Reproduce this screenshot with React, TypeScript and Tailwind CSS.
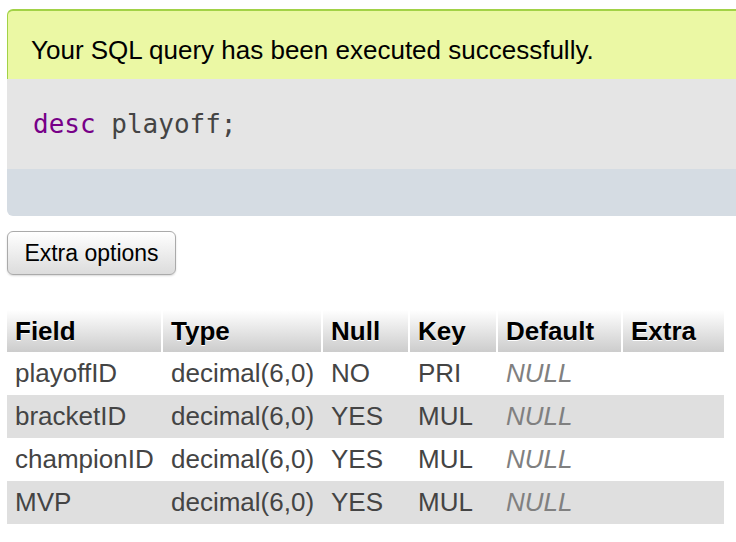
import React from 'react';

const rows = [
    { field: 'playoffID', type: 'decimal(6,0)', nul: 'NO', key: 'PRI' },
    { field: 'bracketID', type: 'decimal(6,0)', nul: 'YES', key: 'MUL' },
    { field: 'championID', type: 'decimal(6,0)', nul: 'YES', key: 'MUL' },
    { field: 'MVP', type: 'decimal(6,0)', nul: 'YES', key: 'MUL' },
];

const headers = [
    { label: 'Field', w: 'w-[156px]' },
    { label: 'Type', w: 'w-[160px]' },
    { label: 'Null', w: 'w-[87px]' },
    { label: 'Key', w: 'w-[88px]' },
    { label: 'Default', w: 'w-[125px]' },
    { label: 'Extra', w: 'w-[101px]' },
];

const App = () => {
    return (
        <div className="min-h-screen bg-white overflow-hidden pl-[7px] pt-[9px] font-['Liberation_Sans',Arial,sans-serif]">
            {/* result message */}
            <div className="-mr-6">
                <div className="h-[70px] bg-[#ebf8a4] border border-r-0 border-b-0 border-t-2 border-[#a2d246] rounded-tl-[6px] pl-[23px] pt-[24px]">
                    <span className="block text-[26px] leading-[30px] text-black">Your SQL query has been executed successfully.</span>
                </div>
                <div className="h-[90px] bg-[#e5e5e5] flex items-center pl-[26px] font-['DejaVu_Sans_Mono',monospace] text-[26px]">
                    <span className="text-[#770088]">desc</span>
                    <span className="text-[#444]">&nbsp;playoff;</span>
                </div>
                <div className="h-[47px] bg-[#d5dce3] rounded-bl-[6px]"></div>
            </div>

            <button className="mt-[15px] h-[44px] w-[169px] rounded-[6px] border border-[#aaa] bg-gradient-to-b from-white to-[#dcdcdc] text-[23px] text-black shadow-[0_1px_2px_rgba(0,0,0,0.15)]">
                Extra options
            </button>

            <table className="mt-[35px] border-separate border-spacing-0 text-[26px]">
                <thead>
                    <tr>
                        {headers.map((h, i) => (
                            <th
                                key={h.label}
                                className={`${h.w} h-[42px] text-left font-bold pl-[8px] text-black bg-gradient-to-b from-white to-[#cccccc] [text-shadow:0_1px_0_#fff] ${i < headers.length - 1 ? 'border-r-2 border-white' : ''}`}
                            >
                                {h.label}
                            </th>
                        ))}
                    </tr>
                </thead>
                <tbody>
                    {rows.map((r, i) => (
                        <tr key={r.field} className={i % 2 === 1 ? 'bg-[#dfdfdf]' : 'bg-white'}>
                            <td className="h-[43px] pl-[8px] text-[#444]">{r.field}</td>
                            <td className="pl-[8px] text-[#444]">{r.type}</td>
                            <td className="pl-[8px] text-[#444]">{r.nul}</td>
                            <td className="pl-[8px] text-[#444]">{r.key}</td>
                            <td className="pl-[8px] text-[#808080] italic">NULL</td>
                            <td className="pl-[8px]"></td>
                        </tr>
                    ))}
                </tbody>
            </table>
        </div>
    );
};

export default App;
